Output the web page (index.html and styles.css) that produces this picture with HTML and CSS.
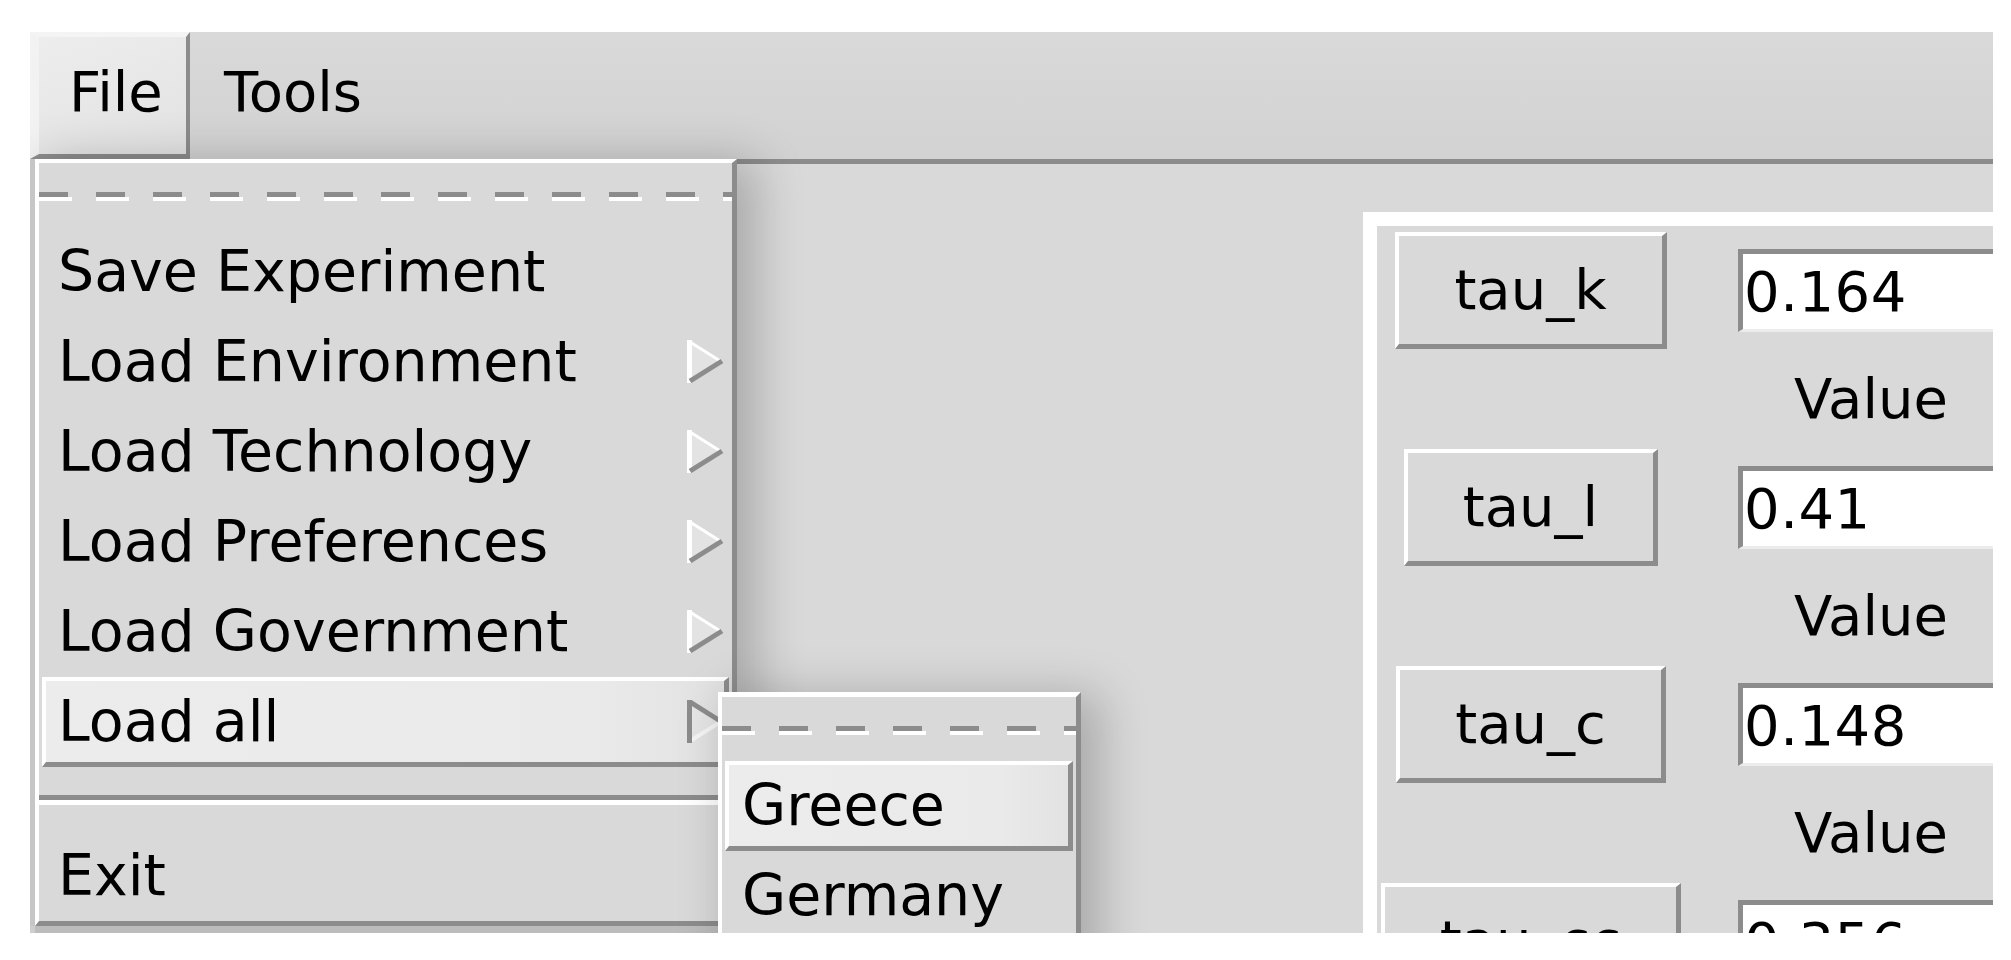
FILE: index.html
```html
<!DOCTYPE html>
<html>
<head>
<meta charset="utf-8">
<title>Experiment</title>
<link rel="stylesheet" href="styles.css">
</head>
<body>
<div class="window">
  <div class="menubar">
    <div class="mb-item mb-open">File</div>
    <div class="mb-item">Tools</div>
  </div>
  <div class="content">
    <div class="panel">
      <div class="params">
        <button class="pbtn">tau_k</button>
        <div class="entry">0.164</div>
        <div class="vlabel">Value</div>

        <button class="pbtn">tau_l</button>
        <div class="entry">0.41</div>
        <div class="vlabel">Value</div>

        <button class="pbtn">tau_c</button>
        <div class="entry">0.148</div>
        <div class="vlabel">Value</div>

        <button class="pbtn">tau_cc</button>
        <div class="entry">0.356</div>
        <div class="vlabel">Value</div>
      </div>
    </div>
  </div>

  <div class="menu menu-file">
    <div class="tearoff"></div>
    <div class="mi">Save Experiment</div>
    <div class="mi">Load Environment<svg class="arrow" viewBox="0 0 37 43"><polygon points="3,2 34,21.5 3,41" fill="#e3e3e3"/><line x1="2.5" y1="0" x2="2.5" y2="43" stroke="#fff" stroke-width="5"/><line x1="3" y1="2" x2="34" y2="21.5" stroke="#fff" stroke-width="3"/><line x1="35" y1="21" x2="3" y2="41" stroke="#8c8c8c" stroke-width="5"/></svg></div>
    <div class="mi">Load Technology<svg class="arrow" viewBox="0 0 37 43"><polygon points="3,2 34,21.5 3,41" fill="#e3e3e3"/><line x1="2.5" y1="0" x2="2.5" y2="43" stroke="#fff" stroke-width="5"/><line x1="3" y1="2" x2="34" y2="21.5" stroke="#fff" stroke-width="3"/><line x1="35" y1="21" x2="3" y2="41" stroke="#8c8c8c" stroke-width="5"/></svg></div>
    <div class="mi">Load Preferences<svg class="arrow" viewBox="0 0 37 43"><polygon points="3,2 34,21.5 3,41" fill="#e3e3e3"/><line x1="2.5" y1="0" x2="2.5" y2="43" stroke="#fff" stroke-width="5"/><line x1="3" y1="2" x2="34" y2="21.5" stroke="#fff" stroke-width="3"/><line x1="35" y1="21" x2="3" y2="41" stroke="#8c8c8c" stroke-width="5"/></svg></div>
    <div class="mi">Load Government<svg class="arrow" viewBox="0 0 37 43"><polygon points="3,2 34,21.5 3,41" fill="#e3e3e3"/><line x1="2.5" y1="0" x2="2.5" y2="43" stroke="#fff" stroke-width="5"/><line x1="3" y1="2" x2="34" y2="21.5" stroke="#fff" stroke-width="3"/><line x1="35" y1="21" x2="3" y2="41" stroke="#8c8c8c" stroke-width="5"/></svg></div>
    <div class="mi mi-active">Load all<svg class="arrow" viewBox="0 0 37 43"><polygon points="3,2 34,21.5 3,41" fill="#e6e6e6"/><line x1="35" y1="21" x2="3" y2="41" stroke="#f6f6f6" stroke-width="4"/><line x1="2.5" y1="0" x2="2.5" y2="43" stroke="#8c8c8c" stroke-width="5"/><line x1="3" y1="2" x2="34" y2="21.5" stroke="#8c8c8c" stroke-width="5"/></svg></div>
    <div class="sep"></div>
    <div class="mi">Exit</div>
  </div>

  <div class="menu menu-sub">
    <div class="tearoff"></div>
    <div class="mi mi-active">Greece</div>
    <div class="mi">Germany</div>
  </div>
</div>
</body>
</html>
```

FILE: styles.css
```css
html, body {
  margin: 0;
  padding: 0;
  background: #ffffff;
}

body {
  font-family: "DejaVu Sans", "Liberation Sans", sans-serif;
  font-size: 56px;
  color: #000;
}

.window {
  position: relative;
  margin: 32px 0 0 30px;
  width: 1963px;
  height: 901px;
  overflow: hidden;
  background: #d9d9d9;
  display: flex;
  flex-direction: column;
}

/* ---------- menubar ---------- */
.menubar {
  display: flex;
  align-items: flex-start;
  height: 132px;
  box-sizing: border-box;
  border-bottom: 5px solid #8c8c8c;
  background: linear-gradient(180deg, #d9d9d9 0%, #d2d2d2 100%);
  flex: none;
}

.mb-item {
  line-height: 120px;
  padding: 0 30px 0 34px;
  white-space: nowrap;
}

.mb-open {
  box-sizing: border-box;
  width: 160px;
  height: 127px;
  line-height: 110px;
  padding: 0 0 7px 30px;
  border-style: solid;
  border-width: 5px 4px 5px 9px;
  border-color: #f4f4f4 #8c8c8c #8c8c8c #f2f2f2;
  background: linear-gradient(160deg, #ededed 0%, #e2e2e2 100%);
}

/* ---------- main content ---------- */
.content {
  flex: 1;
  padding: 48px 0 0 1333px;
}

.panel {
  border-top: 14px solid #fff;
  border-left: 14px solid #fff;
  padding-left: 4px;
  width: 700px;
}

.params {
  display: grid;
  grid-template-columns: 300px 266px;
  grid-template-rows: repeat(4, 129px 88px);
  column-gap: 57px;
  align-items: center;
}

.pbtn {
  grid-column: 1;
  justify-self: center;
  -webkit-appearance: none;
  appearance: none;
  box-sizing: border-box;
  height: 117px;
  margin: 0;
  padding: 0 55px;
  font-family: "DejaVu Sans", "Liberation Sans", sans-serif;
  font-size: 56px;
  line-height: 108px;
  color: #000;
  background: #d9d9d9;
  border-style: solid;
  border-width: 4px 5px 5px 4px;
  border-color: #fff #8c8c8c #8c8c8c #fff;
  border-radius: 0;
  white-space: nowrap;
}

.entry {
  grid-column: 2;
  box-sizing: border-box;
  width: 266px;
  height: 83px;
  line-height: 75px;
  padding-left: 1px;
  background: #fff;
  border-top: 5px solid #8c8c8c;
  border-left: 5px solid #8c8c8c;
  border-bottom: 3px solid #ececec;
  white-space: nowrap;
  letter-spacing: 0.5px;
}

.vlabel {
  grid-column: 2;
  justify-self: center;
  line-height: 88px;
}

/* ---------- menus ---------- */
.menu {
  position: absolute;
  box-sizing: border-box;
  background: #d9d9d9;
  border-style: solid;
  font-size: 57px;
}

.menu-file {
  left: 5px;
  top: 127px;
  width: 702px;
  border-width: 4px 5px 5px 4px;
  border-color: #fff #8c8c8c #8c8c8c #fff;
  box-shadow: -5px 0 0 0 #c6c6c6, 0 7px 0 0 #bcbcbc, 14px 8px 44px 6px rgba(0, 0, 0, 0.22);
  z-index: 2;
}

.menu-sub {
  left: 688px;
  top: 660px;
  width: 363px;
  height: 300px;
  border-width: 5px 5px 0 4px;
  border-color: #fff #8c8c8c #8c8c8c #fff;
  box-shadow: 14px 8px 44px 6px rgba(0, 0, 0, 0.22);
  z-index: 3;
}

.tearoff {
  position: relative;
  height: 64px;
}

.tearoff::before,
.tearoff::after {
  content: "";
  position: absolute;
  left: 0;
  right: 0;
}

.tearoff::before {
  top: 29px;
  height: 5px;
  background: repeating-linear-gradient(90deg, #8c8c8c 0 29px, transparent 29px 57px);
}

.tearoff::after {
  top: 34px;
  height: 4px;
  background: repeating-linear-gradient(90deg, #ffffff 0 33px, transparent 33px 57px);
}

.mi {
  box-sizing: border-box;
  height: 90px;
  margin: 0 3px;
  border-style: solid;
  border-width: 4px 5px 5px 4px;
  border-color: transparent;
  line-height: 81px;
  padding-left: 12px;
  display: flex;
  align-items: center;
  justify-content: space-between;
  white-space: nowrap;
}

.menu-sub .mi {
  padding-left: 13px;
}

.mi-active {
  background: linear-gradient(90deg, #ececec 0%, #eaeaea 80%, #e2e2e2 100%);
  border-color: #fff #8c8c8c #8c8c8c #fff;
}

.arrow {
  width: 37px;
  height: 43px;
  flex: none;
}

.sep {
  position: relative;
  height: 64px;
}

.sep::before,
.sep::after {
  content: "";
  position: absolute;
  left: 0;
  right: 0;
  height: 5px;
}

.sep::before {
  top: 28px;
  background: #8c8c8c;
}

.sep::after {
  top: 33px;
  background: #fff;
}
```
